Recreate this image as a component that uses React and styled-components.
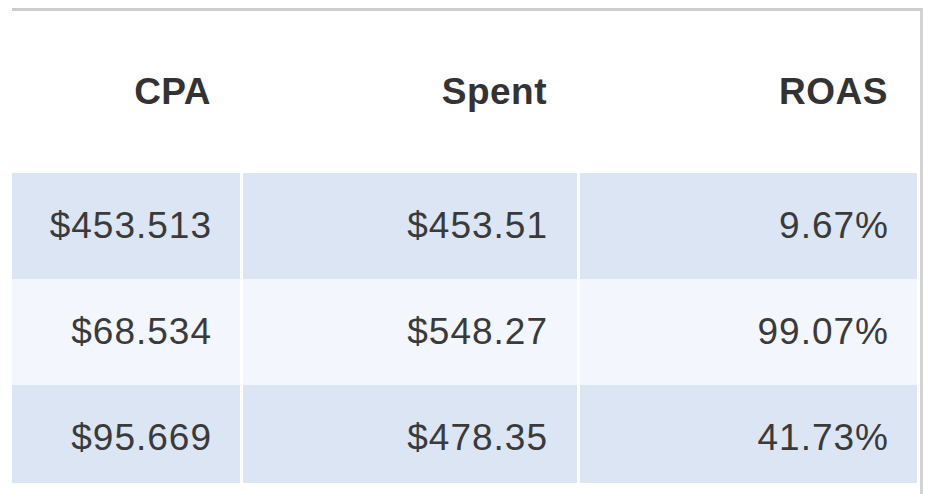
import React from 'react';
import styled, { createGlobalStyle } from 'styled-components';

const GlobalStyle = createGlobalStyle`
  html, body {
    margin: 0;
    padding: 0;
    background: #fff;
  }
  body {
    font-family: "Liberation Sans", Arial, Helvetica, sans-serif;
    color: #333;
  }
`;

const Page = styled.div`
  width: 928px;
  height: 494px;
  padding: 8px 0 0 12px;
  box-sizing: border-box;
  overflow: hidden;
`;

const Frame = styled.div`
  width: 911px;
  height: 486px;
  box-sizing: border-box;
  border-top: 3px solid #cdcdcd;
  border-right: 3px solid #d3d3d3;
  padding-right: 3px;
`;

const Scroller = styled.div`
  height: 472px;
  overflow: hidden;
`;

const Table = styled.div`
  display: grid;
  grid-template-columns: 228px 334px 337px;
  grid-template-rows: 162px;
  grid-auto-rows: 106px;
  column-gap: 3px;
`;

const HeadCell = styled.div`
  display: flex;
  align-items: center;
  justify-content: flex-end;
  padding-right: ${p => p.$pad}px;
  font-size: 37px;
  letter-spacing: 0.5px;
  font-weight: 700;
  color: #333;
`;

const Cell = styled.div`
  display: flex;
  align-items: center;
  justify-content: flex-end;
  padding-right: ${p => p.$pad - 1}px;
  font-size: 37px;
  letter-spacing: 1px;
  color: #3a3a3a;
  background: ${p => (p.$odd ? '#dce5f4' : '#f3f6fc')};
`;

const columns = [
  { key: 'cpa', label: 'CPA', pad: 29 },
  { key: 'spent', label: 'Spent', pad: 30 },
  { key: 'roas', label: 'ROAS', pad: 29 },
];

const rows = [
  { cpa: '$453.513', spent: '$453.51', roas: '9.67%' },
  { cpa: '$68.534', spent: '$548.27', roas: '99.07%' },
  { cpa: '$95.669', spent: '$478.35', roas: '41.73%' },
];

const App = () => (
  <>
    <GlobalStyle />
    <Page>
      <Frame>
        <Scroller>
          <Table>
            {columns.map(col => (
              <HeadCell key={col.key} $pad={col.pad}>{col.label}</HeadCell>
            ))}
            {rows.map((row, idx) =>
              columns.map(col => (
                <Cell key={`${idx}-${col.key}`} $odd={idx % 2 === 0} $pad={col.pad}>
                  {row[col.key]}
                </Cell>
              ))
            )}
          </Table>
        </Scroller>
      </Frame>
    </Page>
  </>
);

export default App;
